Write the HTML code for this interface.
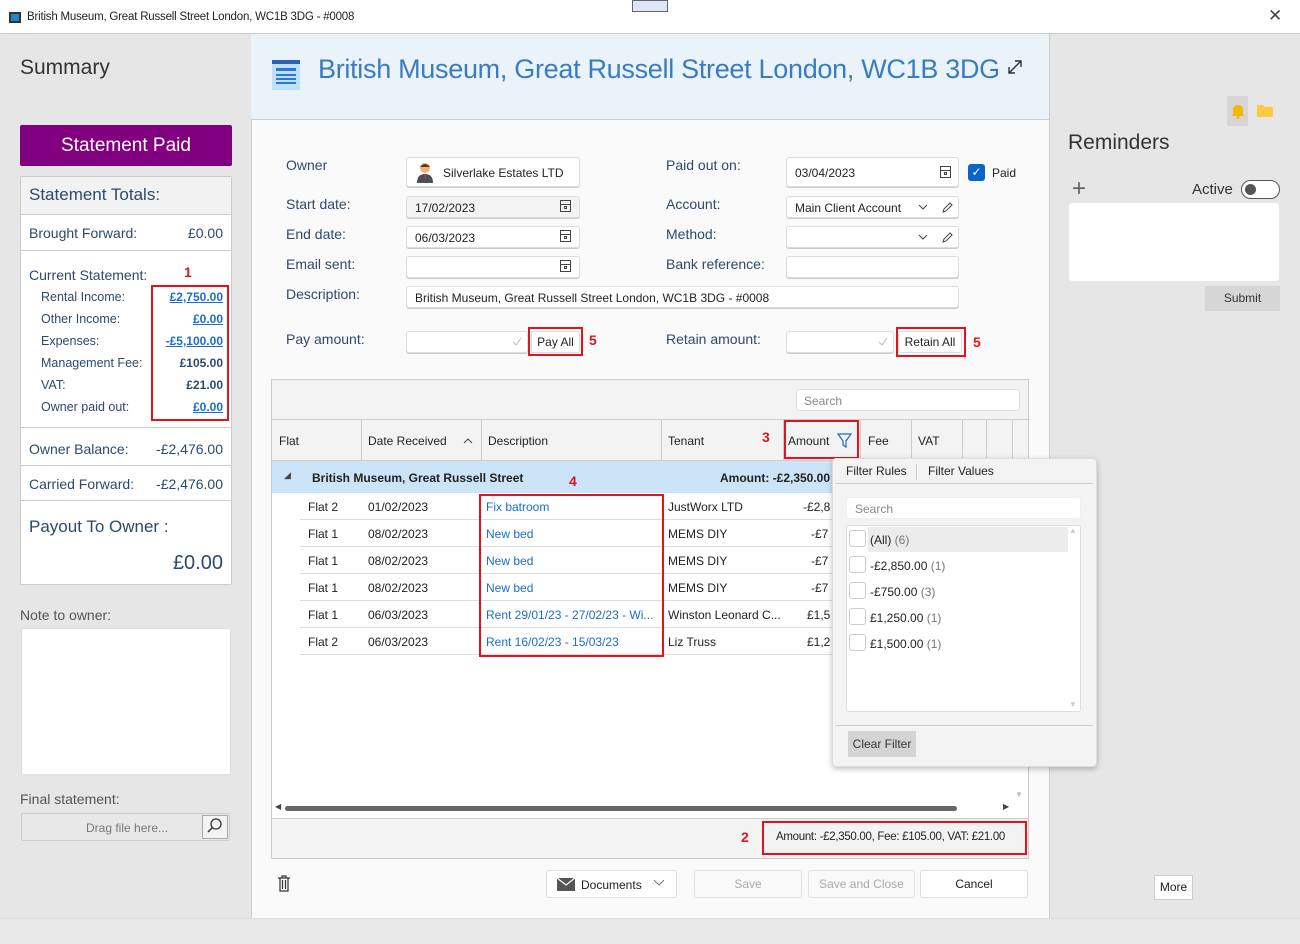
<!DOCTYPE html>
<html><head><meta charset="utf-8"><style>
*{box-sizing:border-box;margin:0;padding:0}
body{width:1300px;height:944px;position:relative;overflow:hidden;background:#e6e6e6;font-family:"Liberation Sans",sans-serif;font-size:12px;color:#222}
.a{position:absolute}
.t{position:absolute;white-space:nowrap}
.lb{color:#2c4a6b;font-size:14px}
.in{position:absolute;background:#fff;border:1px solid #ddd;border-radius:3px;box-shadow:0 1px 0 #ccc}
.red{position:absolute;border:2px solid #e0141e}
.rn{position:absolute;color:#e0141e;font-weight:bold;font-size:14px}
.lk{color:#1a6fc4;font-weight:bold;text-decoration:underline}
.row{position:absolute;left:300px;width:532px;height:27px;border-bottom:1px solid #ddd;background:#fff}
.row span{position:absolute;top:7px;white-space:nowrap}
.btn{position:absolute;background:#fff;border:1px solid #ddd;border-radius:3px;text-align:center;font-size:12px}
.cb{position:absolute;width:17px;height:17px;border:1px solid #ccc;border-radius:3px;background:#fff}
</style></head><body>
<!-- title bar -->
<div class="a" style="left:0;top:0;width:1300px;height:34px;background:#fff;border-bottom:1px solid #ccc"></div>
<div class="a" style="left:9px;top:12px;width:12px;height:11px;background:#1e88c8;border:2px solid #333"></div>
<div class="t" style="left:27px;top:11px;font-size:11.5px;letter-spacing:-0.2px">British Museum, Great Russell Street London, WC1B 3DG - #0008</div>
<div class="a" style="left:632px;top:0;width:36px;height:12px;border:1px solid #666;background:#dde6f5"></div>
<div class="t" style="left:1268px;top:6px;font-size:17px;color:#444">✕</div>
<div class="a" style="left:0;top:918px;width:1300px;height:26px;background:#e9e9e9;border-top:1px solid #ddd"></div>

<!-- left panel -->
<div class="t" style="left:20px;top:56px;font-size:21px;color:#333">Summary</div>
<div class="a" style="left:20px;top:125px;width:212px;height:41px;background:#800080;border-radius:2px;color:#fff;font-size:19px;text-align:center;line-height:41px">Statement Paid</div>
<div class="a" style="left:20px;top:176px;width:212px;height:409px;background:#fff;border:1px solid #ccc;border-radius:2px"></div>
<div class="a" style="left:21px;top:177px;width:210px;height:38px;background:#f2f2f2;border-bottom:1px solid #ccc"></div>
<div class="t" style="left:29px;top:185px;font-size:17px;color:#2c4a6b">Statement Totals:</div>
<div class="t lb" style="left:29px;top:225px">Brought Forward:</div><div class="t lb" style="right:1077px;top:225px">£0.00</div>
<div class="a" style="left:21px;top:250px;width:210px;height:1px;background:#ccc"></div>
<div class="t lb" style="left:29px;top:267px">Current Statement:</div>
<div class="rn" style="left:184px;top:264px">1</div>
<div class="t lb" style="left:41px;top:290px;font-size:12.5px">Rental Income:</div>
<div class="t lb" style="left:41px;top:312px;font-size:12.5px">Other Income:</div>
<div class="t lb" style="left:41px;top:334px;font-size:12.5px">Expenses:</div>
<div class="t lb" style="left:41px;top:356px;font-size:12.5px">Management Fee:</div>
<div class="t lb" style="left:41px;top:378px;font-size:12.5px">VAT:</div>
<div class="t lb" style="left:41px;top:400px;font-size:12.5px">Owner paid out:</div>
<div class="t lk" style="right:1077px;top:290px">£2,750.00</div>
<div class="t lk" style="right:1077px;top:312px">£0.00</div>
<div class="t lk" style="right:1077px;top:334px">-£5,100.00</div>
<div class="t" style="right:1077px;top:356px;color:#2c4a6b;font-weight:bold">£105.00</div>
<div class="t" style="right:1077px;top:378px;color:#2c4a6b;font-weight:bold">£21.00</div>
<div class="t lk" style="right:1077px;top:400px">£0.00</div>
<div class="red" style="left:151px;top:285px;width:78px;height:136px"></div>
<div class="a" style="left:21px;top:427px;width:210px;height:1px;background:#ccc"></div>
<div class="t lb" style="left:29px;top:441px">Owner Balance:</div><div class="t lb" style="right:1077px;top:441px">-£2,476.00</div>
<div class="a" style="left:21px;top:465px;width:210px;height:1px;background:#ccc"></div>
<div class="t lb" style="left:29px;top:476px">Carried Forward:</div><div class="t lb" style="right:1077px;top:476px">-£2,476.00</div>
<div class="a" style="left:21px;top:500px;width:210px;height:1px;background:#ccc"></div>
<div class="t" style="left:29px;top:517px;font-size:17px;color:#2c4a6b">Payout To Owner :</div>
<div class="t" style="right:1077px;top:552px;font-size:20px;color:#2c4a6b">£0.00</div>
<div class="t" style="left:20px;top:607px;font-size:14px;color:#555">Note to owner:</div>
<div class="a" style="left:21px;top:628px;width:210px;height:147px;background:#fff;border-radius:2px;border:1px solid #ddd"></div>
<div class="t" style="left:20px;top:791px;font-size:14px;color:#555">Final statement:</div>
<div class="a" style="left:21px;top:813px;width:209px;height:28px;background:#e8e8e8;border:1px solid #ccc;border-radius:2px"></div>
<div class="t" style="left:86px;top:821px;color:#777">Drag file here...</div>
<div class="a" style="left:202px;top:815px;width:26px;height:24px;border:1px solid #aaa;background:#f3f3f3"></div>
<svg class="a" style="left:206px;top:817px" width="18" height="18"><circle cx="10" cy="7" r="5" fill="none" stroke="#333" stroke-width="1.3"/><line x1="6.5" y1="10.5" x2="2" y2="15" stroke="#333" stroke-width="1.5"/></svg>

<!-- center -->
<div class="a" style="left:251px;top:34px;width:799px;height:884px;background:#fafafa;border-left:1px solid #ccc;border-right:1px solid #ccc"></div>
<div class="a" style="left:251px;top:34px;width:798px;height:86px;background:#eaf2fa;border-bottom:1px solid #ccc"></div>
<svg class="a" style="left:272px;top:60px" width="28" height="30"><rect x="0" y="0" width="28" height="30" fill="#bfe0fa"/><rect x="0" y="0" width="28" height="4" fill="#2b62b8"/><rect x="4" y="8" width="20" height="3" fill="#2b78d0"/><rect x="4" y="14" width="20" height="2" fill="#2b78d0"/><rect x="4" y="18" width="20" height="2" fill="#2b78d0"/><rect x="4" y="22" width="20" height="2" fill="#2b78d0"/></svg>
<div class="t" style="left:318px;top:54px;font-size:27px;letter-spacing:-0.3px;color:#3a7cc0;width:680px;overflow:hidden">British Museum, Great Russell Street London, WC1B 3DG</div>
<svg class="a" style="left:1007px;top:59px" width="16" height="16"><path d="M2 14 L14 2 M8 2 H14 V8 M2 8 V14 H8" fill="none" stroke="#333" stroke-width="1.4"/></svg>

<div class="t lb" style="left:286px;top:157px">Owner</div>
<div class="t lb" style="left:286px;top:196px">Start date:</div>
<div class="t lb" style="left:286px;top:226px">End date:</div>
<div class="t lb" style="left:286px;top:256px">Email sent:</div>
<div class="t lb" style="left:286px;top:286px">Description:</div>
<div class="t lb" style="left:286px;top:331px">Pay amount:</div>
<div class="t lb" style="left:666px;top:157px">Paid out on:</div>
<div class="t lb" style="left:666px;top:196px">Account:</div>
<div class="t lb" style="left:666px;top:226px">Method:</div>
<div class="t lb" style="left:666px;top:256px">Bank reference:</div>
<div class="t lb" style="left:666px;top:331px">Retain amount:</div>

<div class="in" style="left:406px;top:157px;width:174px;height:30px"></div>
<svg class="a" style="left:416px;top:161px" width="18" height="22"><circle cx="9" cy="7" r="5" fill="#f2b27a"/><path d="M4 6 Q9 0 14 6" fill="#5a3a20"/><path d="M1 22 Q1 13 9 13 Q17 13 17 22Z" fill="#4a4f5a"/><path d="M8 14 L10 14 L9 20Z" fill="#c33"/></svg>
<div class="t" style="left:443px;top:166px">Silverlake Estates LTD</div>
<div class="in" style="left:406px;top:196px;width:174px;height:22px;background:#f3f3f3"></div>
<div class="t" style="left:415px;top:201px">17/02/2023</div>
<div class="in" style="left:406px;top:226px;width:174px;height:22px"></div>
<div class="t" style="left:415px;top:231px">06/03/2023</div>
<div class="in" style="left:406px;top:256px;width:174px;height:22px"></div>
<div class="in" style="left:406px;top:286px;width:553px;height:22px"></div>
<div class="t" style="left:415px;top:291px">British Museum, Great Russell Street London, WC1B 3DG - #0008</div>
<div class="in" style="left:786px;top:157px;width:173px;height:30px"></div>
<div class="t" style="left:795px;top:166px">03/04/2023</div>
<div class="a" style="left:968px;top:164px;width:17px;height:17px;background:#0a64c8;border-radius:3px;color:#fff;font-size:12px;text-align:center;line-height:17px">✓</div>
<div class="t" style="left:992px;top:166px">Paid</div>
<div class="in" style="left:786px;top:196px;width:173px;height:22px"></div>
<div class="t" style="left:795px;top:201px">Main Client Account</div>
<div class="in" style="left:786px;top:226px;width:173px;height:22px"></div>
<div class="in" style="left:786px;top:256px;width:173px;height:22px"></div>
<div class="in" style="left:406px;top:331px;width:122px;height:22px"></div>
<div class="btn" style="left:531px;top:331px;width:49px;height:22px;line-height:21px">Pay All</div>
<div class="red" style="left:528px;top:327px;width:55px;height:29px"></div>
<div class="rn" style="left:589px;top:332px">5</div>
<div class="in" style="left:786px;top:331px;width:108px;height:22px"></div>
<div class="btn" style="left:898px;top:331px;width:64px;height:22px;line-height:21px">Retain All</div>
<div class="red" style="left:896px;top:327px;width:70px;height:30px"></div>
<div class="rn" style="left:973px;top:334px">5</div>
<svg class="a" style="left:0;top:0" width="1300" height="360">
<g fill="none" stroke="#444" stroke-width="1">
<rect x="560.5" y="200.5" width="10" height="11"/><line x1="560" y1="204.5" x2="571" y2="204.5"/><rect x="564.5" y="206.5" width="2" height="2"/>
<rect x="560.5" y="230.5" width="10" height="11"/><line x1="560" y1="234.5" x2="571" y2="234.5"/><rect x="564.5" y="236.5" width="2" height="2"/>
<rect x="560.5" y="260.5" width="10" height="11"/><line x1="560" y1="264.5" x2="571" y2="264.5"/><rect x="564.5" y="266.5" width="2" height="2"/>
<rect x="940.5" y="166.5" width="10" height="11"/><line x1="940" y1="170.5" x2="951" y2="170.5"/><rect x="944.5" y="172.5" width="2" height="2"/>
<path d="M919 205 L923 209 L927 205"/><path d="M919 235 L923 239 L927 235"/>
<path d="M943 212 L944 209 L950 203 L952 205 L946 211Z"/><path d="M943 242 L944 239 L950 233 L952 235 L946 241Z"/>
</g>
<g fill="none" stroke="#bbb"><path d="M513 342 L516 345 L521 338"/><path d="M879 342 L882 345 L887 338"/></g>
</svg>

<!-- grid -->
<div class="a" style="left:271px;top:379px;width:758px;height:480px;background:#fff;border:1px solid #ccc"></div>
<div class="a" style="left:272px;top:380px;width:756px;height:40px;background:#f3f3f3;border-bottom:1px solid #ccc"></div>
<div class="in" style="left:796px;top:389px;width:224px;height:22px;box-shadow:none"></div>
<div class="t" style="left:804px;top:394px;color:#888">Search</div>
<div class="a" style="left:272px;top:420px;width:756px;height:41px;background:#f3f3f3;border-bottom:1px solid #ccc"></div>
<svg class="a" style="left:0;top:420px" width="1030" height="41"><g stroke="#ccc"><line x1="361.5" y1="0" x2="361.5" y2="41"/><line x1="481.5" y1="0" x2="481.5" y2="41"/><line x1="661.5" y1="0" x2="661.5" y2="41"/><line x1="783.5" y1="0" x2="783.5" y2="41"/><line x1="860.5" y1="0" x2="860.5" y2="41"/><line x1="911.5" y1="0" x2="911.5" y2="41"/><line x1="962.5" y1="0" x2="962.5" y2="41"/><line x1="986.5" y1="0" x2="986.5" y2="41"/><line x1="1012.5" y1="0" x2="1012.5" y2="41"/></g><path d="M464 23 L468 19 L472 23" fill="none" stroke="#444"/><path d="M838 14 H851 L846 21 V27 L843 25 V21Z" fill="none" stroke="#1a6fc4" stroke-width="1.2"/></svg>
<div class="t" style="left:279px;top:434px">Flat</div>
<div class="t" style="left:368px;top:434px">Date Received</div>
<div class="t" style="left:488px;top:434px">Description</div>
<div class="t" style="left:668px;top:434px">Tenant</div>
<div class="t" style="left:788px;top:434px">Amount</div>
<div class="t" style="left:868px;top:434px">Fee</div>
<div class="t" style="left:918px;top:434px">VAT</div>
<div class="rn" style="left:762px;top:429px">3</div>
<div class="red" style="left:784px;top:420px;width:75px;height:39px"></div>
<div class="a" style="left:272px;top:461px;width:560px;height:32px;background:#cce4f7"></div>
<div class="t" style="left:284px;top:470px;font-size:9px;color:#444">◢</div>
<div class="t" style="left:312px;top:471px;font-weight:bold">British Museum, Great Russell Street</div>
<div class="t" style="left:720px;top:471px;font-weight:bold">Amount: -£2,350.00</div>
<div class="rn" style="left:569px;top:473px">4</div>
<div class="row" style="top:493px"><span style="left:8px">Flat 2</span><span style="left:68px">01/02/2023</span><span style="left:186px;color:#1a6fc4">Fix batroom</span><span style="left:368px">JustWorx LTD</span><span style="left:503px">-£2,8</span></div>
<div class="row" style="top:520px"><span style="left:8px">Flat 1</span><span style="left:68px">08/02/2023</span><span style="left:186px;color:#1a6fc4">New bed</span><span style="left:368px">MEMS DIY</span><span style="left:511px">-£7</span></div>
<div class="row" style="top:547px"><span style="left:8px">Flat 1</span><span style="left:68px">08/02/2023</span><span style="left:186px;color:#1a6fc4">New bed</span><span style="left:368px">MEMS DIY</span><span style="left:511px">-£7</span></div>
<div class="row" style="top:574px"><span style="left:8px">Flat 1</span><span style="left:68px">08/02/2023</span><span style="left:186px;color:#1a6fc4">New bed</span><span style="left:368px">MEMS DIY</span><span style="left:511px">-£7</span></div>
<div class="row" style="top:601px"><span style="left:8px">Flat 1</span><span style="left:68px">06/03/2023</span><span style="left:186px;color:#1a6fc4">Rent 29/01/23 - 27/02/23 - Wi...</span><span style="left:368px">Winston Leonard C...</span><span style="left:507px">£1,5</span></div>
<div class="row" style="top:628px"><span style="left:8px">Flat 2</span><span style="left:68px">06/03/2023</span><span style="left:186px;color:#1a6fc4">Rent 16/02/23 - 15/03/23</span><span style="left:368px">Liz Truss</span><span style="left:507px">£1,2</span></div>
<div class="red" style="left:479px;top:494px;width:185px;height:163px"></div>
<div class="a" style="left:285px;top:806px;width:672px;height:5px;background:#666;border-radius:3px"></div>
<div class="t" style="left:275px;top:802px;font-size:8px;color:#444">◀</div>
<div class="t" style="left:1003px;top:802px;font-size:8px;color:#444">▶</div>
<div class="t" style="left:1015px;top:790px;font-size:8px;color:#bbb">▼</div>
<div class="a" style="left:272px;top:818px;width:756px;height:40px;background:#f3f3f3;border-top:1px solid #ccc"></div>
<div class="rn" style="left:741px;top:829px">2</div>
<div class="red" style="left:762px;top:821px;width:265px;height:34px"></div>
<div class="t" style="left:776px;top:831px;font-size:11.5px;letter-spacing:-0.3px">Amount: -£2,350.00, Fee: £105.00, VAT: £21.00</div>

<!-- filter popup -->
<div class="a" style="left:832px;top:458px;width:265px;height:309px;background:#f3f3f3;border:1px solid #ddd;border-radius:4px;box-shadow:0 2px 6px rgba(0,0,0,.25)"></div>
<div class="t" style="left:846px;top:464px">Filter Rules</div>
<div class="a" style="left:916px;top:464px;width:1px;height:16px;background:#ccc"></div>
<div class="t" style="left:928px;top:464px">Filter Values</div>
<div class="a" style="left:836px;top:483px;width:257px;height:1px;background:#ccc"></div>
<div class="in" style="left:846px;top:497px;width:235px;height:22px;box-shadow:none;border-color:#eee"></div>
<div class="t" style="left:855px;top:502px;color:#888">Search</div>
<div class="in" style="left:846px;top:525px;width:235px;height:187px;box-shadow:none"></div>
<div class="a" style="left:868px;top:527px;width:200px;height:25px;background:#ececec"></div>
<div class="cb" style="left:849px;top:530px"></div><div class="t" style="left:870px;top:533px">(All) <span style="color:#777">(6)</span></div>
<div class="cb" style="left:849px;top:556px"></div><div class="t" style="left:870px;top:559px">-£2,850.00 <span style="color:#777">(1)</span></div>
<div class="cb" style="left:849px;top:582px"></div><div class="t" style="left:870px;top:585px">-£750.00 <span style="color:#777">(3)</span></div>
<div class="cb" style="left:849px;top:608px"></div><div class="t" style="left:870px;top:611px">£1,250.00 <span style="color:#777">(1)</span></div>
<div class="cb" style="left:849px;top:634px"></div><div class="t" style="left:870px;top:637px">£1,500.00 <span style="color:#777">(1)</span></div>
<div class="t" style="left:1069px;top:526px;font-size:8px;color:#ccc">▲</div>
<div class="t" style="left:1069px;top:700px;font-size:8px;color:#ccc">▼</div>
<div class="a" style="left:836px;top:725px;width:257px;height:1px;background:#ccc"></div>
<div class="a" style="left:848px;top:731px;width:68px;height:26px;background:#d4d4d4;line-height:26px;text-align:center;color:#333">Clear Filter</div>

<!-- bottom buttons -->
<svg class="a" style="left:277px;top:875px" width="14" height="18"><path d="M1 3 H13 M5 3 V1 H9 V3 M3 3 V16 H11 V3 M5.5 5 V14 M8.5 5 V14" fill="none" stroke="#333" stroke-width="1.2"/></svg>
<div class="btn" style="left:546px;top:870px;width:131px;height:28px"></div>
<svg class="a" style="left:557px;top:878px" width="18" height="13"><rect width="18" height="13" fill="#555"/><path d="M0 0 L9 7 L18 0" fill="none" stroke="#fff" stroke-width="1.2"/></svg>
<div class="t" style="left:581px;top:878px">Documents</div>
<svg class="a" style="left:654px;top:880px" width="10" height="6"><path d="M0 0 L5 5 L10 0" fill="none" stroke="#777"/></svg>
<div class="btn" style="left:694px;top:870px;width:108px;height:28px;line-height:27px;color:#aaa;background:#f9f9f9;border-color:#e4e4e4">Save</div>
<div class="btn" style="left:808px;top:870px;width:107px;height:28px;line-height:27px;color:#aaa;background:#f9f9f9;border-color:#e4e4e4">Save and Close</div>
<div class="btn" style="left:920px;top:870px;width:108px;height:28px;line-height:27px">Cancel</div>

<!-- right panel -->
<div class="a" style="left:1227px;top:96px;width:21px;height:30px;background:#d6d6d6"></div>
<svg class="a" style="left:1230px;top:103px" width="16" height="16"><path d="M3 12 V7 Q3 2 8 2 Q13 2 13 7 V12 L15 13 H1Z" fill="#f5b800"/><circle cx="8" cy="14.5" r="1.5" fill="#f5b800"/></svg>
<svg class="a" style="left:1257px;top:104px" width="16" height="13"><path d="M0 1 H6 L8 3 H16 V13 H0Z" fill="#ffc83d"/></svg>
<div class="t" style="left:1068px;top:131px;font-size:21px;color:#333">Reminders</div>
<div class="t" style="left:1072px;top:175px;font-size:24px;color:#666;font-weight:300">+</div>
<div class="t" style="left:1192px;top:181px;font-size:15px;color:#333">Active</div>
<div class="a" style="left:1241px;top:180px;width:39px;height:19px;border:1px solid #555;border-radius:10px;background:#fff"></div>
<div class="a" style="left:1245px;top:184px;width:11px;height:11px;border-radius:6px;background:#555"></div>
<div class="a" style="left:1069px;top:203px;width:210px;height:78px;background:#fff;border-radius:3px"></div>
<div class="a" style="left:1205px;top:286px;width:75px;height:25px;background:#d6d6d6;text-align:center;line-height:25px;color:#333">Submit</div>
<div class="a" style="left:1154px;top:875px;width:39px;height:25px;background:#fff;border:1px solid #ccc;text-align:center;line-height:23px">More</div>
</body></html>
